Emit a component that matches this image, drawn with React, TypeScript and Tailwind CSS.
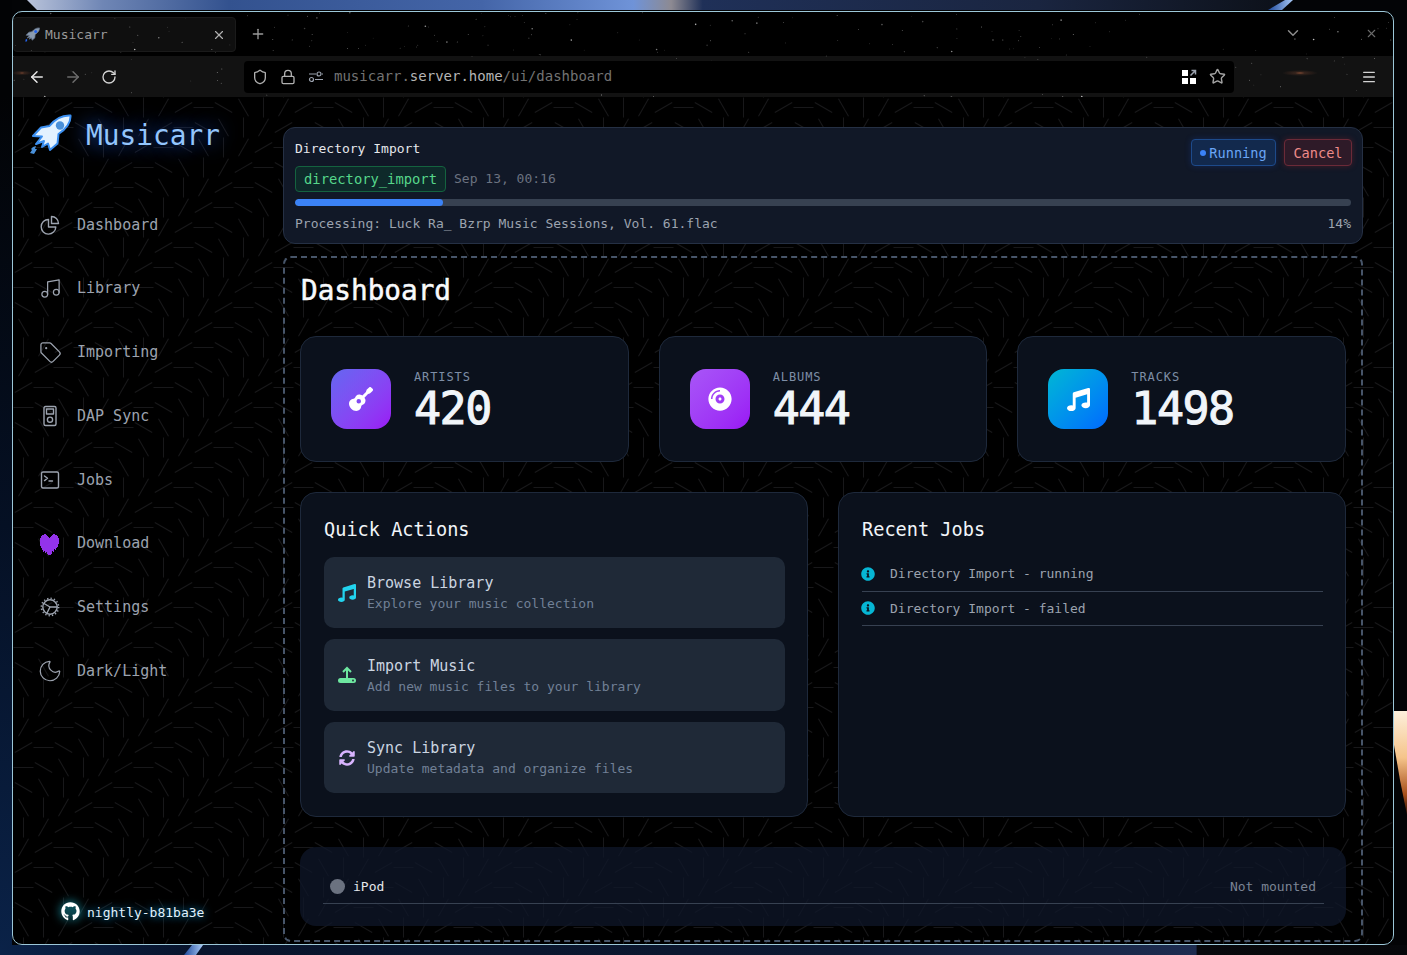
import type { ReactNode } from "react";
import { ArrowLeft, ArrowRight, ChevronDown, Lock, Menu, Moon, Music, Plus, RotateCw, Shield, Star, Tag, X } from "lucide-react";
import { FaCompactDisc, FaGithub, FaGuitar, FaInfoCircle, FaMusic, FaSyncAlt } from "react-icons/fa";

// Wallpaper behind the browser window
function Wallpaper() {
  return (
    <svg className="absolute inset-0" width="1407" height="955">
      <defs>
        <linearGradient id="side" x1="0" y1="0" x2="0" y2="1">
          <stop offset="0.1" stopColor="#020305" />
          <stop offset="0.55" stopColor="#051024" />
          <stop offset="1" stopColor="#0a2248" />
        </linearGradient>
        <linearGradient id="band" x1="0" y1="0" x2="1" y2="0">
          <stop offset="0" stopColor="#b9c3da" />
          <stop offset="0.06" stopColor="#6f86b5" />
          <stop offset="0.16" stopColor="#33528f" />
          <stop offset="0.36" stopColor="#4465a8" />
          <stop offset="0.48" stopColor="#6f93d8" />
          <stop offset="0.51" stopColor="#8d8a92" />
          <stop offset="0.535" stopColor="#1f3058" />
          <stop offset="0.8" stopColor="#1a2540" />
          <stop offset="1" stopColor="#0c1018" />
        </linearGradient>
        <linearGradient id="slash" x1="0" y1="0" x2="1" y2="0">
          <stop offset="0" stopColor="#1f4a9c" />
          <stop offset="1" stopColor="#a8c8f5" />
        </linearGradient>
        <linearGradient id="bottom" x1="0" y1="0" x2="1" y2="0">
          <stop offset="0" stopColor="#0a2248" />
          <stop offset="0.14" stopColor="#08142c" />
          <stop offset="0.6" stopColor="#0c1830" />
          <stop offset="0.85" stopColor="#1d2c50" />
          <stop offset="0.851" stopColor="#08090d" />
          <stop offset="1" stopColor="#06070a" />
        </linearGradient>
        <linearGradient id="flare" x1="0" y1="0" x2="0" y2="1">
          <stop offset="0" stopColor="#fdf0dc" />
          <stop offset="0.45" stopColor="#f5c48a" />
          <stop offset="0.8" stopColor="#a8501c" />
          <stop offset="1" stopColor="#2a0e04" />
        </linearGradient>
      </defs>
      <rect width="1407" height="955" fill="#030406" />
      <rect width="12" height="955" fill="url(#side)" />
      <rect y="945" width="1407" height="10" fill="url(#bottom)" />
      <polygon points="27,0 1290,0 1272,10 37,10" fill="url(#band)" />
      <polygon points="1285,0 1293,0 1282,10 1268,10" fill="url(#slash)" />
      <polygon points="192,945 203,945 196,955 184,955" fill="url(#slash)" />
      <polygon points="1394,711 1407,711 1407,815 1400,780 1394,745" fill="url(#flare)" />
    </svg>
  );
}

// Seeded star field for the tab strip and toolbar
function Stars() {
  let seed = 42;
  const next = () => {
    seed = (seed * 16807) % 2147483647;
    return seed / 2147483647;
  };
  const stars = Array.from({ length: 260 }, () => ({
    x: next() * 1380,
    y: next() * 85,
    r: next() > 0.85 ? 0.8 : 0.45,
    o: 0.2 + next() * 0.55,
  }));
  return (
    <svg className="absolute left-0 top-0" width="1380" height="85">
      <defs>
        <radialGradient id="nebula">
          <stop offset="0" stopColor="#d0683a" stopOpacity="0.8" />
          <stop offset="0.3" stopColor="#804028" stopOpacity="0.3" />
          <stop offset="1" stopColor="#804028" stopOpacity="0" />
        </radialGradient>
      </defs>
      {stars.map((s, i) => (
        <circle key={i} cx={s.x} cy={s.y} r={s.r} fill="#fff" opacity={s.o} />
      ))}
      <ellipse cx="1287" cy="61" rx="18" ry="3" fill="url(#nebula)" />
      <ellipse cx="9" cy="61" rx="10" ry="2.5" fill="url(#nebula)" />
    </svg>
  );
}

// 36 strokes on a 20px grid, angle turns 30deg per step
function LinePattern() {
  const lines = [];
  for (let i = 0; i < 6; i++) {
    for (let j = 0; j < 6; j++) {
      const x = 3 + 20 * i;
      const y = 7 + 20 * j;
      lines.push(
        <line
          key={`${i}-${j}`}
          x1={x - 10}
          y1={y}
          x2={x + 10}
          y2={y}
          transform={`translate(0.5 0.5) rotate(${1.5 * (x + y - 190)} ${x} ${y})`}
        />
      );
    }
  }
  return (
    <svg className="absolute inset-0 h-full w-full">
      <defs>
        <pattern id="dashes" width="120" height="120" patternUnits="userSpaceOnUse" patternTransform="translate(-13 -97)">
          <g stroke="#18181a" strokeWidth="1">
            {lines}
            {lines.map((l, k) => (
              <g key={k} transform="translate(120 0)">{l}</g>
            ))}
            {lines.map((l, k) => (
              <g key={k} transform="translate(-120 0)">{l}</g>
            ))}
            {lines.map((l, k) => (
              <g key={k} transform="translate(0 120)">{l}</g>
            ))}
            {lines.map((l, k) => (
              <g key={k} transform="translate(0 -120)">{l}</g>
            ))}
          </g>
        </pattern>
      </defs>
      <rect width="100%" height="100%" fill="url(#dashes)" />
    </svg>
  );
}

function Rocket({ size, fill, stroke, accent }: { size: number; fill: string; stroke: string; accent: string }) {
  return (
    <svg width={size} height={size} viewBox="0 0 42 42">
      <path
        d="M40.5 2.5C32 2 25 6 19.5 13L11 14.5 3 23l9 .5L6 31l8-3-2 6 6-3.5 2 6.5 7.5-6.5 1-9.5C36 16 41 10 40.5 2.5Z"
        fill={fill}
        stroke={stroke}
        strokeWidth="2"
        strokeLinejoin="round"
      />
      <circle cx="30" cy="12.5" r="4.2" fill={accent} />
      <path d="M3 34l3-1-1 3 2 0-3 5-4-1 2-3-1-1Z" fill={accent} />
    </svg>
  );
}

const iconProps = { fill: "none", stroke: "#9ca3af", strokeWidth: 1.4, strokeLinecap: "round", strokeLinejoin: "round" } as const;

function PieIcon() {
  return (
    <svg width="20" height="20" viewBox="0 0 20 20" {...iconProps}>
      <path d="M8.5 4.5a7.3 7.3 0 1 0 7.3 7.5H8.5Z" />
      <path d="M11.5 1.5a7 7 0 0 1 7 7h-7Z" />
    </svg>
  );
}

function IpodIcon() {
  return (
    <svg width="20" height="22" viewBox="0 0 20 22" {...iconProps}>
      <rect x="4" y="1.5" width="12" height="19" rx="1.5" />
      <rect x="6.5" y="4" width="7" height="5" />
      <circle cx="10" cy="14.7" r="2.6" />
    </svg>
  );
}

function TerminalIcon() {
  return (
    <svg width="20" height="20" viewBox="0 0 20 20" {...iconProps}>
      <rect x="1.5" y="2" width="17" height="16" rx="1.5" />
      <path d="M4.5 6l3 2.3-3 2.3M9 11h3.5" />
    </svg>
  );
}

function GearIcon() {
  return (
    <svg width="20" height="20" viewBox="0 0 20 20" {...iconProps}>
      <circle cx="10" cy="10" r="7.2" />
      <circle cx="10" cy="10" r="8.6" strokeWidth="1.6" strokeDasharray="1.3 2.1" strokeLinecap="butt" />
      <path d="M10 10 4 6.5M10 10h7M10 10l-3 6" />
    </svg>
  );
}

function HeartIcon() {
  return (
    <svg width="22" height="22" viewBox="0 0 22 22" fill="#9333ea">
      <path d="M1 5h1V3h1V2h2V1h2v1h1v1h1v1h1v1h1V4h1V3h1V2h1V1h2v1h2v1h1v2h1v6h-1v3h-1v1h-1v2h-1v-1h-1v3h-1v-1h-1v3h-1v2h-1v2h-1v-2H9v-2H8v-2H7v1H6v-2H5v1H4v-2H3v-2H2v-2H1Z" />
    </svg>
  );
}

function TrayUpIcon() {
  return (
    <svg width="18" height="18" viewBox="0 0 18 18">
      <rect x="0" y="12" width="18" height="5" rx="2.5" fill="#6ee7a0" />
      <circle cx="15" cy="14.5" r="0.9" fill="#1f2937" />
      <path d="M9 13V2M5 6l4-4 4 4" fill="none" stroke="#6ee7a0" strokeWidth="2" />
    </svg>
  );
}

function QrIcon() {
  return (
    <svg width="16" height="16" viewBox="0 0 16 16">
      <rect x="1" y="1" width="6" height="6" fill="#fff" />
      <rect x="1" y="9" width="6" height="6" fill="#fff" />
      <rect x="9" y="9" width="6" height="6" fill="#fff" />
      <path d="M9.5 6.5 14.5 1.5M10.5 1.5h4v4" fill="none" stroke="#9ca3af" strokeWidth="1.5" />
    </svg>
  );
}

function PermsIcon() {
  return (
    <svg width="16" height="16" viewBox="0 0 16 16" fill="none" stroke="#9ca3af" strokeWidth="1.2">
      <circle cx="11" cy="5" r="2" />
      <circle cx="3.5" cy="10.5" r="2" />
      <path d="M1 5h7M14 5h1M7 10.5h8" />
    </svg>
  );
}

const navItems: { label: string; icon: ReactNode }[] = [
  { label: "Dashboard", icon: <PieIcon /> },
  { label: "Library", icon: <Music size={23} color="#9ca3af" strokeWidth={1.3} className="shrink-0" /> },
  { label: "Importing", icon: <Tag size={23} color="#9ca3af" strokeWidth={1.3} className="shrink-0" /> },
  { label: "DAP Sync", icon: <IpodIcon /> },
  { label: "Jobs", icon: <TerminalIcon /> },
  { label: "Download", icon: <HeartIcon /> },
  { label: "Settings", icon: <GearIcon /> },
  { label: "Dark/Light", icon: <Moon size={26} color="#9ca3af" strokeWidth={1.15} className="shrink-0" /> },
];

const stats = [
  { label: "ARTISTS", value: "420", bg: "bg-gradient-to-br from-[#6366f1] to-[#9a14f5]", icon: <FaGuitar size={24} color="#fff" /> },
  { label: "ALBUMS", value: "444", bg: "bg-gradient-to-br from-[#a855f7] to-[#9a14f5]", icon: <FaCompactDisc size={24} color="#fff" /> },
  { label: "TRACKS", value: "1498", bg: "bg-gradient-to-br from-[#06b6d4] to-[#0068ff]", icon: <FaMusic size={23} color="#fff" /> },
];

const actions = [
  { title: "Browse Library", sub: "Explore your music collection", icon: <FaMusic size={18} color="#22d3ee" />, h: "h-[71px]" },
  { title: "Import Music", sub: "Add new music files to your library", icon: <TrayUpIcon />, h: "h-[72px]" },
  { title: "Sync Library", sub: "Update metadata and organize files", icon: <FaSyncAlt size={16} color="#d8b4fe" />, h: "h-[71px]" },
];

export default function App() {
  return (
    <div className="relative h-[955px] w-[1407px] overflow-hidden font-['DejaVu_Sans_Mono',monospace]">
      <Wallpaper />

      {/* Browser window */}
      <div className="absolute left-[12px] top-[11px] flex h-[934px] w-[1382px] flex-col overflow-hidden rounded-[10px] border border-[#9cc7d8] bg-black">
        <div className="relative h-[85px] shrink-0">
          <Stars />
          <div className="relative flex h-[44px] items-start">
            <div className="mt-[5px] flex h-[35px] w-[223px] items-center rounded-[4px] border border-[#1a1a1a] bg-white/[0.06] pl-[11px] pr-[9px]">
              <Rocket size={15} fill="#8a9bb0" stroke="#64748b" accent="#2563eb" />
              <span className="ml-[5px] flex-1 text-[13px] text-[#9a9a9a]">Musicarr</span>
              <X size={14} color="#b0b0b0" />
            </div>
            <Plus size={16} color="#9a9a9a" className="ml-[14px] mt-[14px]" />
            <ChevronDown size={18} color="#8a8a8a" className="absolute left-[1271px] top-[12px]" />
            <X size={13} color="#6b6b6b" className="absolute left-[1352px] top-[15px]" />
          </div>
          <div className="relative flex h-[41px] items-center bg-white/[0.07]">
            <ArrowLeft size={18} color="#e5e5e5" className="ml-[15px]" />
            <ArrowRight size={18} color="#6b6b6b" className="ml-[18px]" />
            <RotateCw size={16} color="#d4d4d4" className="ml-[19px]" />
            <div className="ml-[127px] flex h-[32px] w-[990px] items-center rounded-[4px] bg-black pl-[8px] pr-[8px]">
              <Shield size={16} color="#b0b0b0" />
              <Lock size={16} color="#b0b0b0" className="ml-[12px]" />
              <span className="ml-[12px]"><PermsIcon /></span>
              <span className="ml-[10px] flex-1 text-[14px] text-[#737373]">
                musicarr.<span className="text-[#b5b5b5]">server.home</span>/ui/dashboard
              </span>
              <QrIcon />
              <Star size={17} color="#a3a3a3" className="ml-[12px]" />
            </div>
            <Menu size={16} color="#d4d4d4" className="ml-[127px]" />
          </div>
        </div>

        <div className="relative flex min-h-0 flex-1">
          <LinePattern />

          {/* Sidebar */}
          <aside className="relative flex w-[270px] shrink-0 flex-col">
            <div className="ml-[17px] mt-[16px] flex h-[42px] items-center">
              <Rocket size={42} fill="#e3f2ff" stroke="#3b8ff0" accent="#4a90d9" />
              <span className="ml-[14px] mt-[4px] text-[27.8px] leading-[42px] text-[#93c5fd] [text-shadow:0_0_20px_#2563eb]">Musicarr</span>
            </div>
            <nav className="mt-[38px] flex flex-col">
              {navItems.map((item) => (
                <div key={item.label} className="flex h-[63.75px] items-center">
                  <span className="ml-[26px] flex w-[22px] justify-center">{item.icon}</span>
                  <span className="ml-[16px] text-[15px] text-[#9ca3af]">{item.label}</span>
                </div>
              ))}
            </nav>
            <div className="mb-[21px] ml-[48px] mt-auto flex h-[24px] items-center">
              <FaGithub size={19} color="#fff" className="drop-shadow-[0_0_5px_#22d3ee]" />
              <span className="ml-[7px] mt-[4px] text-[13px] text-[#e0f2fe] [text-shadow:0_0_8px_#0ea5e9]">nightly-b81ba3e</span>
            </div>
          </aside>

          {/* Main */}
          <main className="relative w-[1080px] shrink-0 pt-[30px]">
            <div className="h-[117px] rounded-[12px] border border-[#253044] bg-[#111827] px-[11px] pt-[11px]">
              <div className="flex items-start justify-between">
                <div>
                  <div className="h-[19px] text-[13px] leading-[19px] text-[#e5e7eb]">Directory Import</div>
                  <div className="mt-[8px] flex items-center">
                    <span className="flex h-[26px] w-[151px] items-center justify-center rounded-[4px] border border-[#14633f] bg-[#0e2a2a] text-[13.8px] text-[#56d68a]">directory_import</span>
                    <span className="ml-[8px] text-[13px] text-[#6b7280]">Sep 13, 00:16</span>
                  </div>
                </div>
                <div className="-mr-px flex gap-[8px]">
                  <span className="flex h-[27px] w-[85px] items-center justify-center gap-[3px] rounded-[4px] border border-[#1d4a8a] bg-[#12294d] pt-px text-[13.6px] text-[#6aa5f5] shadow-[0_0_6px_#1d4ed840]">
                    <span className="h-[6px] w-[6px] rounded-full bg-[#3b82f6]" />
                    Running
                  </span>
                  <span className="flex h-[27px] w-[68px] items-center justify-center rounded-[4px] border border-[#6b2a38] bg-[#2e1a28] pt-[2px] text-[13.6px] text-[#ee8a8a] shadow-[0_0_6px_#dc262640]">Cancel</span>
                </div>
              </div>
              <div className="mt-[7px] h-[7px] overflow-hidden rounded-full bg-[#374151]">
                <div className="h-full w-[14%] rounded-full bg-[#3b82f6]" />
              </div>
              <div className="mt-[9px] flex justify-between text-[13px] leading-[18px] text-[#9ca3af]">
                <span>Processing: Luck Ra_ Bzrp Music Sessions, Vol. 61.flac</span>
                <span>14%</span>
              </div>
            </div>

            <div className="mt-[12px] h-[686px] rounded-[8px] border-2 border-dashed border-[#475569] px-[15px] pt-[15px]">
              <h1 className="pl-px text-[27.7px] leading-[36px] text-[#f8fafc] [-webkit-text-stroke:0.5px_#f8fafc]">Dashboard</h1>

              <div className="mt-[27px] grid h-[126px] grid-cols-3 gap-[30px]">
                {stats.map((s) => (
                  <div key={s.label} className="flex items-center rounded-[16px] border border-[#1e293b] bg-[#0b111c] pl-[30px]">
                    <div className={`flex h-[60px] w-[60px] items-center justify-center rounded-[16px] ${s.bg}`}>{s.icon}</div>
                    <div className="ml-[23px] mt-[4px]">
                      <div className="text-[12px] leading-[16px] tracking-[0.9px] text-[#7e8ea6]">{s.label}</div>
                      <div className="text-[45px] leading-[48px] tracking-[-1.5px] text-[#f1f5f9] [-webkit-text-stroke:1px_#f1f5f9]">{s.value}</div>
                    </div>
                  </div>
                ))}
              </div>

              <div className="mt-[30px] grid h-[325px] grid-cols-2 gap-[30px]">
                <section className="rounded-[16px] border border-[#1e293b] bg-[#0b111c] pl-[23px] pr-[22px] pt-[22px]">
                  <h2 className="text-[18.6px] leading-[30px] text-[#f1f5f9]">Quick Actions</h2>
                  <div className="mt-[12px] flex flex-col gap-[11px]">
                    {actions.map((a) => (
                      <div key={a.title} className={`flex items-center rounded-[10px] bg-[#1f2937] pl-[14px] ${a.h}`}>
                        <span className="flex w-[18px] justify-center">{a.icon}</span>
                        <div className="ml-[11px]">
                          <div className="pt-px text-[15px] leading-[22px] text-[#cbd5e1]">{a.title}</div>
                          <div className="text-[13px] leading-[20px] text-[#718096]">{a.sub}</div>
                        </div>
                      </div>
                    ))}
                  </div>
                </section>

                <section className="rounded-[16px] border border-[#1e293b] bg-[#0b111c] pl-[23px] pr-[22px] pt-[22px]">
                  <h2 className="text-[18.6px] leading-[30px] text-[#f1f5f9]">Recent Jobs</h2>
                  <div className="mt-[12px]">
                    {["Directory Import - running", "Directory Import - failed"].map((job) => (
                      <div key={job} className="flex h-[34.5px] items-center border-b border-[#374151]">
                        <FaInfoCircle size={14} color="#06b6d4" className="-ml-px" />
                        <span className="ml-[15px] text-[13px] text-[#9ca3af]">{job}</span>
                      </div>
                    ))}
                  </div>
                </section>
              </div>

              <div className="mt-[30px] h-[79px] rounded-[16px] bg-[#0f172a]/75 pl-[23px] pr-[22px] pt-[22px]">
                <div className="flex h-[35px] items-center border-b border-[#374151] pl-[7px] pr-[8px]">
                  <span className="h-[15px] w-[15px] rounded-full bg-[#6b7280]" />
                  <span className="ml-[8px] flex-1 pt-px text-[13px] text-[#e5e7eb]">iPod</span>
                  <span className="pt-px text-[13px] text-[#7b8494]">Not mounted</span>
                </div>
              </div>
            </div>
          </main>
        </div>
      </div>
    </div>
  );
}
